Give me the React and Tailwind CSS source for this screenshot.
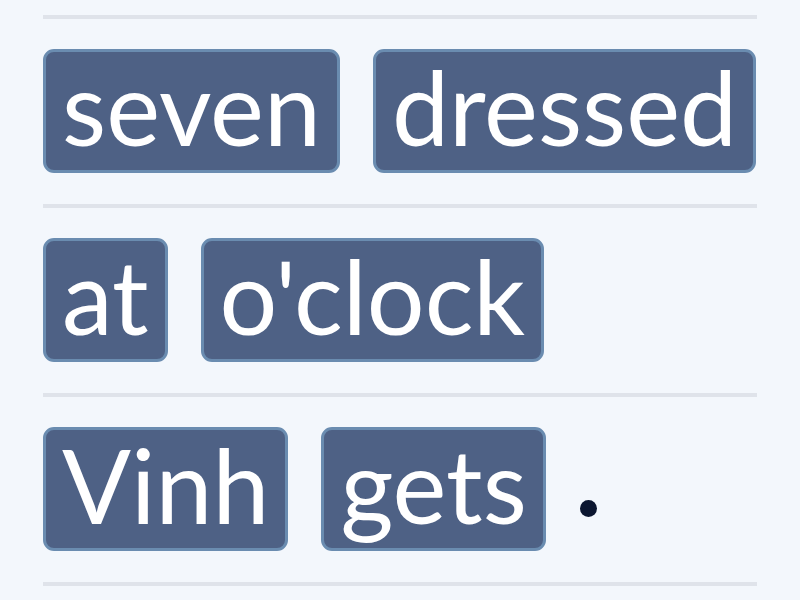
export default function App() {
  const rows = [["seven", "dressed"], ["at", "o'clock"], ["Vinh", "gets"]];
  return (
    <div className="w-[800px] h-[600px] bg-[#f3f7fc] overflow-hidden" style={{ fontFamily: "Lato, 'Open Sans', sans-serif" }}>
      <div className="mx-[43px] w-[714px] pt-[15px]">
        <div className="h-[4px] bg-[#dfe3ea]" />
        {rows.map((r, i) => (
          <div key={i}>
            <div className="flex items-center gap-[33px] pt-[30px] pb-[31px] h-[185px]">
              {r.map((w) => (
                <div key={w} className="h-[124px] flex items-center px-[16px] rounded-[11px] border-[3px] border-[#6a8cb0] bg-[#4e6185] text-white text-[102px] leading-none">
                  <span className="relative top-[-4px]">{w}</span>
                </div>
              ))}
              {i === 2 && <div className="w-[17px] h-[17px] rounded-full bg-[#0b1630] mt-[38px] ml-[1px]" />}
            </div>
            <div className="h-[4px] bg-[#dfe3ea]" />
          </div>
        ))}
      </div>
    </div>
  );
}
